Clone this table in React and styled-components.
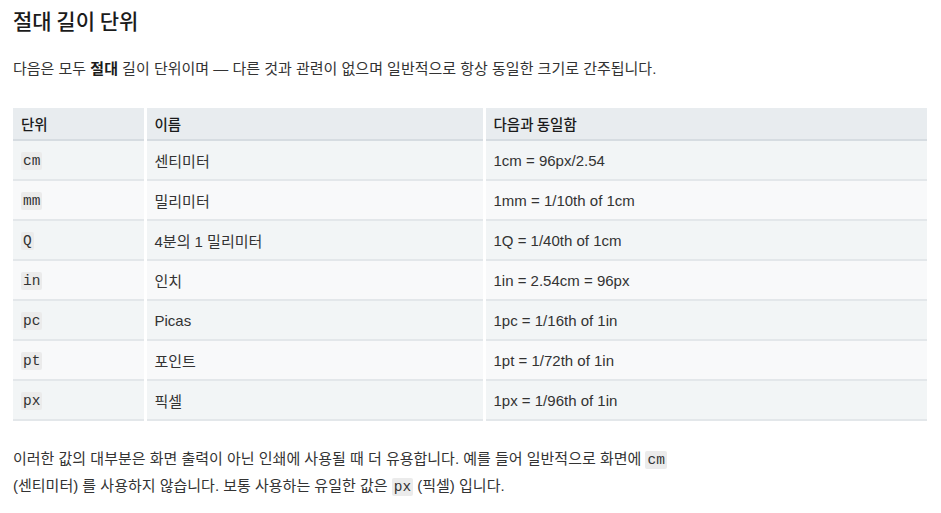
import React from "react";
import styled, { createGlobalStyle } from "styled-components";

const GlobalStyle = createGlobalStyle`
  body {
    margin: 0;
    background: #ffffff;
    color: #333333;
    font-family: "Liberation Sans", "Noto Sans CJK KR", sans-serif;
  }
`;

const units = [
  { unit: "cm", name: "센티미터", equals: "1cm = 96px/2.54" },
  { unit: "mm", name: "밀리미터", equals: "1mm = 1/10th of 1cm" },
  { unit: "Q", name: "4분의 1 밀리미터", equals: "1Q = 1/40th of 1cm" },
  { unit: "in", name: "인치", equals: "1in = 2.54cm = 96px" },
  { unit: "pc", name: "Picas", equals: "1pc = 1/16th of 1in" },
  { unit: "pt", name: "포인트", equals: "1pt = 1/72th of 1in" },
  { unit: "px", name: "픽셀", equals: "1px = 1/96th of 1in" },
];

const App = () => {
  return (
    <Page>
      <GlobalStyle />
      <Title>절대 길이 단위</Title>
      <Text>
        다음은 모두 <strong>절대</strong> 길이 단위이며 — 다른 것과 관련이 없으며
        일반적으로 항상 동일한 크기로 간주됩니다.
      </Text>
      <Table>
        <colgroup>
          <col style={{ width: 132 }} />
          <col style={{ width: 339 }} />
          <col />
        </colgroup>
        <thead>
          <tr>
            <Th>단위</Th>
            <Th>이름</Th>
            <Th>다음과 동일함</Th>
          </tr>
        </thead>
        <tbody>
          {units.map((row, i) => (
            <Row key={row.unit} $odd={i % 2 === 0}>
              <Td>
                <Code>{row.unit}</Code>
              </Td>
              <Td>{row.name}</Td>
              <Td>{row.equals}</Td>
            </Row>
          ))}
        </tbody>
      </Table>
      <Note>
        이러한 값의 대부분은 화면 출력이 아닌 인쇄에 사용될 때 더 유용합니다. 예를
        들어 일반적으로 화면에 <Code>cm</Code> (센티미터) 를 사용하지 않습니다.
        보통 사용하는 유일한 값은 <Code>px</Code> (픽셀) 입니다.
      </Note>
    </Page>
  );
};

const Page = styled.div`
  padding: 8px 14px 0 13px;
`;

const Title = styled.h3`
  margin: 0;
  font-family: "Noto Sans CJK KR", sans-serif;
  font-size: 21px;
  font-weight: 500;
  line-height: 25px;
  color: #1b1b1b;
`;

const Text = styled.p`
  margin: 23px 0 0;
  font-size: 15px;
  line-height: 26px;

  strong {
    font-weight: 700;
    color: #1b1b1b;
  }
`;

const Table = styled.table`
  width: 914px;
  margin-top: 26px;
  border-collapse: collapse;
  table-layout: fixed;
  font-size: 15px;
`;

const Th = styled.th`
  height: 31px;
  padding: 0 8px;
  text-align: left;
  font-family: "Noto Sans CJK KR", sans-serif;
  font-weight: 500;
  font-size: 14.5px;
  color: #1b1b1b;
  background: #e8ecef;
  border-bottom: 2px solid #d6dce1;
  border-right: 3px solid #ffffff;

  &:last-child {
    border-right: none;
  }
`;

const Row = styled.tr`
  background: ${(p) => (p.$odd ? "#f2f5f6" : "#f8f9fa")};
  border-bottom: 2px solid #e3e7ea;
`;

const Td = styled.td`
  height: 38px;
  padding: 0 8px;
  border-right: 3px solid #ffffff;
  vertical-align: middle;

  &:last-child {
    border-right: none;
  }
`;

const Code = styled.code`
  padding: 1px 2px;
  border-radius: 2px;
  background: #ebebeb;
  font-family: "Liberation Mono", monospace;
  font-size: 14.5px;
  color: #333333;
`;

const Note = styled.p`
  max-width: 690px;
  margin: 25px 0 0;
  font-size: 15px;
  line-height: 26px;
  word-break: keep-all;
`;

export default App;
